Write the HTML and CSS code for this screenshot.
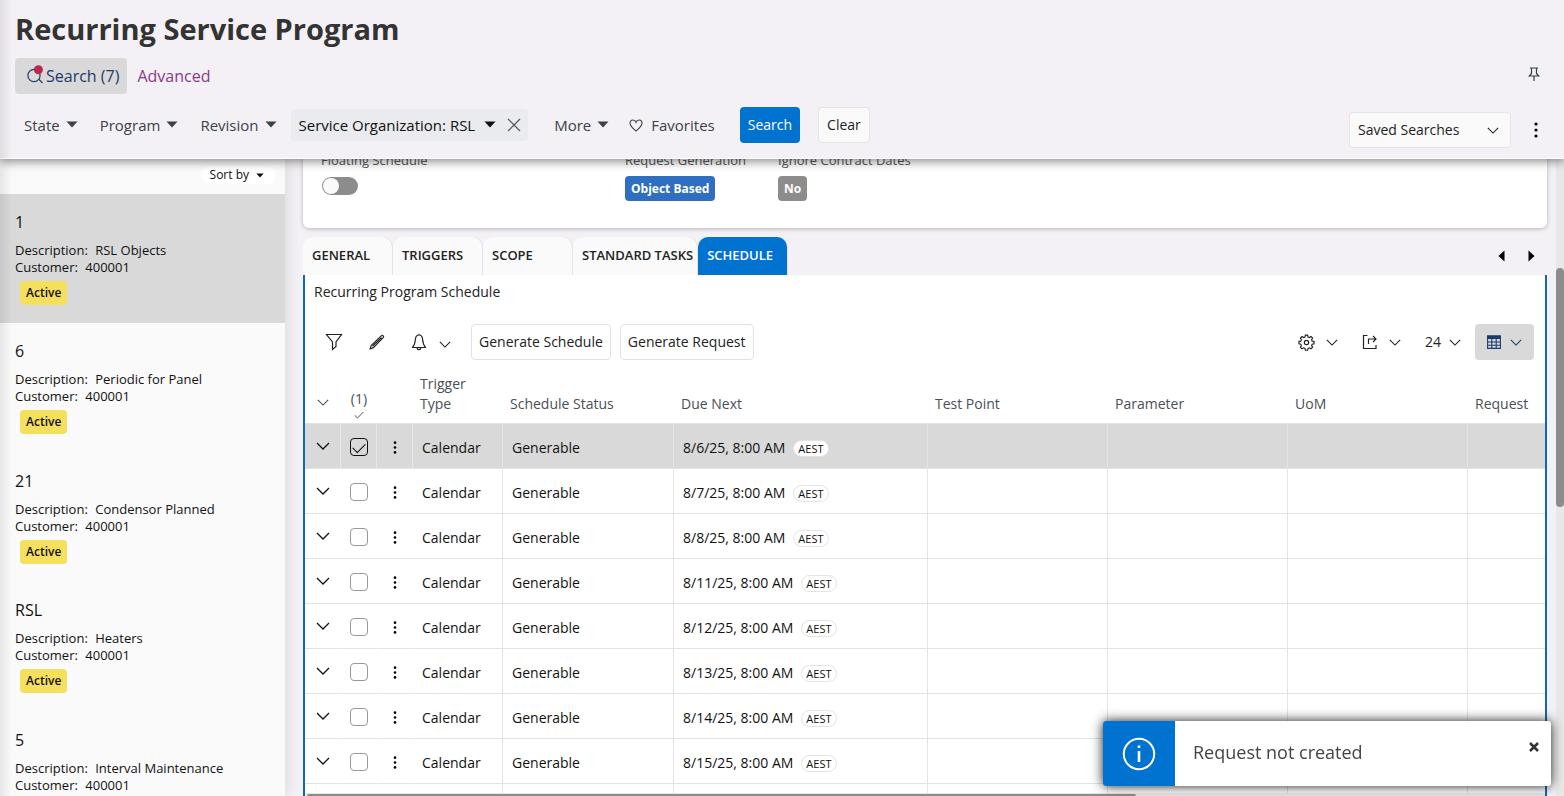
FILE: index.html
```html
<!DOCTYPE html>
<html lang="en">
<head>
    <meta charset="UTF-8">
    <meta name="viewport" content="width=device-width, initial-scale=1.0">
    <title>Recurring Service Program</title>
    <link rel="stylesheet" href="styles.css">
</head>
<body>
    <!-- icon sprite -->
    <svg class="sprite" aria-hidden="true">
        <symbol id="caret" viewBox="0 0 12 7"><path d="M0.5 0.5h11L6 6.5z" fill="currentColor"/></symbol>
        <symbol id="chevron" viewBox="0 0 14 8"><path d="M1 1l6 6 6-6" fill="none" stroke="currentColor" stroke-width="1.3"/></symbol>
        <symbol id="dots" viewBox="0 0 4 16"><circle cx="2" cy="2" r="1.6"/><circle cx="2" cy="8" r="1.6"/><circle cx="2" cy="14" r="1.6"/></symbol>
        <symbol id="cross" viewBox="0 0 14 14"><path d="M1 1l12 12M13 1L1 13" fill="none" stroke="currentColor" stroke-width="1.2"/></symbol>
    </svg>

    <header class="page-header">
        <h1>Recurring Service Program</h1>

        <div class="search-tabs">
            <button type="button" class="search-tab">
                <svg class="icon-search" viewBox="0 0 18 20">
                    <path d="M12.8 14.2l3.7 3.8" fill="none" stroke="#1d3a6b" stroke-width="1.2"/>
                    <circle cx="8" cy="10.5" r="6.1" fill="none" stroke="#1d3a6b" stroke-width="1.2"/>
                    <circle cx="12.4" cy="4.8" r="4.5" fill="#b8294f"/>
                </svg>
                Search (7)
            </button>
            <a href="#" class="advanced-link">Advanced</a>
            <button type="button" class="pin-btn" aria-label="Pin">
                <svg width="12" height="15" viewBox="0 0 12 15"><path d="M2 1h8M3.5 1v5.5L1.3 9h9.4L8.5 6.500V1M6 9v5" fill="none" stroke="currentColor" stroke-width="1.2"/></svg>
            </button>
        </div>

        <div class="filters">
            <button type="button" class="filter">State <svg class="caret"><use href="#caret"/></svg></button>
            <button type="button" class="filter">Program <svg class="caret"><use href="#caret"/></svg></button>
            <button type="button" class="filter">Revision <svg class="caret"><use href="#caret"/></svg></button>
            <div class="filter-chip">
                <button type="button" class="filter">Service Organization: RSL <svg class="caret"><use href="#caret"/></svg></button>
                <button type="button" class="chip-remove" aria-label="Remove"><svg width="14" height="14"><use href="#cross"/></svg></button>
            </div>
            <button type="button" class="filter filter-more">More <svg class="caret"><use href="#caret"/></svg></button>
            <button type="button" class="filter favorites">
                <svg width="14" height="13" viewBox="0 0 14 13"><path d="M7 12C4.500 9.800 1 7.300 1 4.200 1 2.200 2.300 1 3.900 1 5.300 1 6.500 1.900 7 3.200 7.500 1.900 8.700 1 10.100 1 11.700 1 13 2.200 13 4.200 13 7.300 9.500 9.800 7 12z" fill="none" stroke="currentColor" stroke-width="1.1"/></svg>
                Favorites
            </button>
            <button type="submit" class="btn btn-primary">Search</button>
            <button type="button" class="btn btn-clear">Clear</button>
            <div class="select-wrap saved-searches">
                <select aria-label="Saved Searches"><option>Saved Searches</option></select>
                <svg class="chevron"><use href="#chevron"/></svg>
            </div>
            <button type="button" class="menu-btn" aria-label="More options"><svg class="dots"><use href="#dots"/></svg></button>
        </div>
    </header>

    <div class="layout">
        <aside class="sidebar">
            <div class="sort-bar">
                <button type="button" class="sort-btn">Sort by <svg class="caret-small"><use href="#caret"/></svg></button>
            </div>
            <ul class="programs">
                <li class="program selected">
                    <h2>1</h2>
                    <p>Description: <span>RSL Objects</span></p>
                    <p>Customer: <span>400001</span></p>
                    <span class="status">Active</span>
                </li>
                <li class="program">
                    <h2>6</h2>
                    <p>Description: <span>Periodic for Panel</span></p>
                    <p>Customer: <span>400001</span></p>
                    <span class="status">Active</span>
                </li>
                <li class="program">
                    <h2>21</h2>
                    <p>Description: <span>Condensor Planned</span></p>
                    <p>Customer: <span>400001</span></p>
                    <span class="status">Active</span>
                </li>
                <li class="program">
                    <h2>RSL</h2>
                    <p>Description: <span>Heaters</span></p>
                    <p>Customer: <span>400001</span></p>
                    <span class="status">Active</span>
                </li>
                <li class="program">
                    <h2>5</h2>
                    <p>Description: <span>Interval Maintenance</span></p>
                    <p>Customer: <span>400001</span></p>
                </li>
            </ul>
        </aside>

        <main class="content">
            <section class="card">
                <div class="field field-wide">
                    <label for="floating">Floating Schedule</label>
                    <input type="checkbox" id="floating" class="toggle">
                </div>
                <div class="field">
                    <span class="field-label">Request Generation</span>
                    <span class="tag tag-blue">Object Based</span>
                </div>
                <div class="field">
                    <span class="field-label">Ignore Contract Dates</span>
                    <span class="tag tag-grey">No</span>
                </div>
            </section>

            <nav class="tabs">
                <button type="button" class="tab">GENERAL</button>
                <button type="button" class="tab">TRIGGERS</button>
                <button type="button" class="tab">SCOPE</button>
                <button type="button" class="tab">STANDARD TASKS</button>
                <button type="button" class="tab active">SCHEDULE</button>
                <div class="tab-arrows">
                    <button type="button" aria-label="Previous tab"><svg width="7" height="12" viewBox="0 0 7 12"><path d="M6.500 0.500v11L0.500 6z"/></svg></button>
                    <button type="button" aria-label="Next tab"><svg width="7" height="12" viewBox="0 0 7 12"><path d="M0.500 0.500v11L6.500 6z"/></svg></button>
                </div>
            </nav>

            <section class="panel">
                <h3>Recurring Program Schedule</h3>

                <div class="toolbar">
                    <button type="button" class="icon-btn" aria-label="Filter">
                        <svg width="18" height="18" viewBox="0 0 18 18"><path d="M1.500 1.500h15L11 9v4.500L7.500 16.500V9z" fill="none" stroke="currentColor" stroke-width="1.200"/></svg>
                    </button>
                    <button type="button" class="icon-btn" aria-label="Edit">
                        <svg width="18" height="18" viewBox="0 0 18 18"><path d="M2 16l1.300-3.600L13.300 2.900c1.300-1.200 3.100.5 1.900 1.800L5.500 14.600zM4.500 13.300l9-8.700" fill="none" stroke="currentColor" stroke-width="1.200" stroke-linejoin="round"/></svg>
                    </button>
                    <button type="button" class="icon-btn bell" aria-label="Notifications">
                        <svg width="16" height="18" viewBox="0 0 16 18"><path d="M1.500 14.500C3.800 12 4 10.500 4.400 6.500 4.600 3.500 6 2 8 2s3.400 1.500 3.600 4.500c.4 4 .6 5.500 2.900 8zM8 2V.7M6.200 14.700c0 2.600 3.600 2.600 3.600 0" fill="none" stroke="currentColor" stroke-width="1.200" stroke-linejoin="round"/></svg>
                        <svg class="chevron chevron-small"><use href="#chevron"/></svg>
                    </button>
                    <button type="button" class="btn btn-outline">Generate Schedule</button>
                    <button type="button" class="btn btn-outline">Generate Request</button>

                    <div class="view-tools">
                        <button type="button" class="tool" aria-label="Settings">
                            <svg width="17" height="17" viewBox="0 0 18 18"><circle cx="9" cy="9" r="2.300" fill="none" stroke="currentColor" stroke-width="1.200"/><path d="M7.800 1.200h2.400l.4 2 1.500.6 1.700-1.100 1.700 1.700-1.100 1.700.6 1.500 2 .4v2.400l-2 .4-.6 1.500 1.100 1.700-1.700 1.700-1.700-1.100-1.500.6-.4 2H7.800l-.4-2-1.500-.6-1.700 1.100-1.700-1.700 1.100-1.700-.6-1.500-2-.4V8l2-.4.600-1.500-1.100-1.700 1.700-1.700 1.700 1.100 1.500-.6z" fill="none" stroke="currentColor" stroke-width="1.200"/></svg>
                            <svg class="chevron chevron-small"><use href="#chevron"/></svg>
                        </button>
                        <button type="button" class="tool" aria-label="Export">
                            <svg width="16" height="16" viewBox="0 0 16 16"><path d="M5.500 1.500H1.500v13h12.500V11M6.500 10V5H14M11 2l3 3-3 3" fill="none" stroke="currentColor" stroke-width="1.200"/></svg>
                            <svg class="chevron chevron-small"><use href="#chevron"/></svg>
                        </button>
                        <div class="select-wrap page-size">
                            <select aria-label="Rows per page"><option>24</option></select>
                            <svg class="chevron chevron-small"><use href="#chevron"/></svg>
                        </div>
                        <button type="button" class="table-view" aria-label="Table view">
                            <svg width="14" height="14" viewBox="0 0 14 14"><path d="M.6 1h12.800v12.400H.6zM.6 7h12.800M.6 10.200h12.800M4.800 3v10.400M9.200 3v10.400" fill="none" stroke="currentColor" stroke-width="1.100"/><path d="M0 .5h14v3.500H0z" fill="currentColor"/></svg>
                            <svg class="chevron chevron-small"><use href="#chevron"/></svg>
                        </button>
                    </div>
                </div>

                <div class="table-wrap">
                    <table class="schedule">
                        <colgroup>
                            <col class="c-icon"><col class="c-icon"><col class="c-icon"><col class="c-trigger"><col class="c-status"><col class="c-due"><col class="c-wide"><col class="c-wide"><col class="c-wide"><col class="c-wide">
                        </colgroup>
                        <thead>
                            <tr>
                                <th class="cell-icon"><svg class="chevron chevron-small"><use href="#chevron"/></svg></th>
                                <th class="cell-count">(1)<svg width="10" height="8" viewBox="0 0 10 8"><path d="M.7 4.300L3.500 7 9.300 1" fill="none" stroke="currentColor"/></svg></th>
                                <th></th>
                                <th>Trigger Type</th>
                                <th>Schedule Status</th>
                                <th>Due Next</th>
                                <th>Test Point</th>
                                <th>Parameter</th>
                                <th>UoM</th>
                                <th>Request</th>
                            </tr>
                        </thead>
                        <tbody id="rows"></tbody>
                    </table>
                </div>
                <div class="h-scroll"><div class="h-thumb"></div></div>
            </section>
        </main>

        <div class="v-scroll"><div class="v-thumb"></div></div>
    </div>

    <div class="toast" role="status">
        <div class="toast-icon">
            <svg width="34" height="34" viewBox="0 0 34 34"><circle cx="17" cy="17" r="15.200" fill="none" stroke="#fff" stroke-width="2"/><path d="M17 14v11M17 8.500v2.500" stroke="#fff" stroke-width="2.600"/></svg>
        </div>
        <p>Request not created</p>
        <button type="button" class="toast-close" aria-label="Close"><svg width="10" height="10" viewBox="0 0 10 10"><path d="M1 1l8 8M9 1L1 9" stroke="currentColor" stroke-width="2.500"/></svg></button>
    </div>

    <script src="script.js"></script>
</body>
</html>
```
FILE: styles.css
```css
* {
    box-sizing: border-box;
}

body {
    margin: 0;
    height: 100vh;
    display: flex;
    flex-direction: column;
    overflow: hidden;
    background-color: #f3f1f5;
    font-family: "Open Sans", "Noto Sans", sans-serif;
    font-size: 14px;
    line-height: 20px;
    color: #111;
}

/* soft shade along the left edge of the window */
body::after {
    content: "";
    position: fixed;
    top: 0;
    bottom: 0;
    left: 0;
    width: 12px;
    background: linear-gradient(to right, rgba(0, 0, 0, 0.08), rgba(0, 0, 0, 0));
    pointer-events: none;
    z-index: 5;
}

h1, h2, h3, p, ul {
    margin: 0;
    padding: 0;
}

button, select {
    font: inherit;
    color: inherit;
    background: none;
    border: none;
    padding: 0;
    cursor: pointer;
}

.sprite {
    display: none;
}

.caret {
    width: 12px;
    height: 7px;
}

.caret-small {
    width: 8px;
    height: 5px;
}

.chevron {
    width: 14px;
    height: 8px;
}

.chevron-small {
    width: 12px;
    height: 7px;
}

.dots {
    width: 4px;
    height: 16px;
}

/* header */
.page-header {
    position: relative;
    z-index: 2;
    height: 159px;
    flex-shrink: 0;
    padding: 10px 16px 0 15px;
    background-color: #f3f1f5;
    border-bottom: 1px solid #fff;
    box-shadow: 0 2px 10px rgba(0, 0, 0, 0.5);
}

h1 {
    font-size: 29px;
    line-height: 38px;
    font-weight: 700;
    color: #333;
}

.search-tabs {
    display: flex;
    align-items: center;
    gap: 10px;
    margin-top: 10px;
    height: 36px;
    font-size: 16px;
}

.search-tab {
    display: flex;
    align-items: center;
    gap: 2px;
    height: 36px;
    padding: 0 8px 0 11px;
    border-radius: 4px;
    background-color: #d9d9d9;
    color: #1d3a6b;
}

.icon-search {
    width: 18px;
    height: 20px;
    margin-bottom: 2px;
}

.advanced-link {
    color: #873a8c;
    text-decoration: none;
}

.pin-btn {
    margin-left: auto;
    margin-right: 8px;
    color: #333f48;
}

.filters {
    display: flex;
    align-items: center;
    margin-top: 8px;
    padding-left: 9px;
    font-size: 15px;
    color: #3c4145;
}

.filter {
    display: flex;
    align-items: center;
    gap: 6px;
    margin-right: 22px;
    white-space: nowrap;
}

.filter .caret {
    margin-bottom: 2px;
}

.filter-chip {
    display: flex;
    align-items: center;
    height: 32px;
    margin-left: -8px;
    padding: 0 7px 0 8px;
    border-radius: 4px;
    background-color: #eaebee;
    color: #111;
}

.filter-chip .filter {
    gap: 9px;
    margin-right: 11px;
}

.chip-remove {
    display: flex;
    color: #555;
}

.filter-more {
    margin-left: 26px;
    margin-right: 20px;
}

.favorites {
    gap: 8px;
    margin-right: 25px;
}

.btn {
    height: 36px;
    padding: 0 8px;
    border-radius: 4px;
    font-size: 14px;
    white-space: nowrap;
}

.btn-primary {
    background-color: #0073d1;
    color: #fff;
    margin-right: 18px;
}

.btn-clear {
    background-color: #fafafa;
    border: 1px solid #e4e4e6;
    color: #222;
}

.select-wrap {
    position: relative;
    display: flex;
    align-items: center;
}

.select-wrap select {
    appearance: none;
    width: 100%;
    height: 100%;
    font-size: 14px;
}

.select-wrap .chevron {
    position: absolute;
    right: 11px;
    pointer-events: none;
}

.saved-searches {
    width: 162px;
    height: 36px;
    margin-left: auto;
    margin-top: 10px;
    border: 1px solid #e4e4e6;
    border-radius: 4px;
    background-color: #fafafa;
    color: #222;
}

.saved-searches select {
    padding-left: 8px;
}

.saved-searches .chevron {
    width: 12px;
    height: 7px;
}

.menu-btn {
    display: flex;
    margin: 10px 10px 0 23px;
}

/* body of the page */
.layout {
    flex: 1;
    min-height: 0;
    display: flex;
}

.sidebar {
    width: 285px;
    flex-shrink: 0;
    background-color: #fafafa;
    box-shadow: 4px 0 12px rgba(0, 0, 0, 0.08);
    overflow: hidden;
}

.sort-bar {
    display: flex;
    justify-content: flex-end;
    height: 35px;
    padding: 7px 9px 0 0;
}

.sort-btn {
    display: flex;
    align-items: center;
    gap: 7px;
    height: 18px;
    padding: 0 12px 0 9px;
    border-radius: 9px;
    background-color: #fff;
    font-size: 12px;
}

.programs {
    list-style: none;
}

.program {
    height: 129px;
    padding: 17px 15px 0;
    font-size: 13px;
    line-height: 17px;
}

.program:nth-child(even) {
    height: 130px;
}

.program.selected {
    background-color: #d9d9d9;
}

.program h2 {
    margin-bottom: 9px;
    font-size: 16px;
    line-height: 22px;
    font-weight: 400;
}

.program p span {
    margin-left: 4px;
}

.status {
    display: inline-block;
    margin: 5px 0 0 5px;
    padding: 0 6px;
    border-radius: 4px;
    background-color: #f4e05c;
    font-size: 12px;
    line-height: 24px;
    font-weight: 600;
}

.content {
    flex: 1;
    min-width: 0;
    display: flex;
    flex-direction: column;
    margin: 0 9px 0 18px;
}

/* partly scrolled under the header */
.card {
    display: flex;
    gap: 32px;
    flex-shrink: 0;
    height: 80px;
    margin-top: -11px;
    padding: 2px 18px;
    border-radius: 0 0 6px 6px;
    background-color: #fff;
    box-shadow: 0 1px 4px rgba(0, 0, 0, 0.25);
}

.field {
    display: flex;
    flex-direction: column;
    align-items: flex-start;
    gap: 6px;
    font-size: 13px;
    color: #555;
}

.field-wide {
    gap: 7px;
    width: 272px;
}

.toggle {
    appearance: none;
    width: 36px;
    height: 18px;
    margin: 0 0 0 1px;
    border-radius: 9px;
    background-color: #8c8c8c;
}

.toggle::before {
    content: "";
    display: block;
    width: 16px;
    height: 16px;
    margin: 1px;
    border-radius: 50%;
    background-color: #fafafa;
}

.tag {
    padding: 0 6px;
    border-radius: 4px;
    color: #fff;
    font-size: 12px;
    font-weight: 700;
    line-height: 25px;
}

.tag-blue {
    background-color: #2f6fc1;
}

.tag-grey {
    background-color: #8c8c8c;
}

.tabs {
    display: flex;
    gap: 1px;
    flex-shrink: 0;
    margin-top: 9px;
}

.tab {
    min-width: 89px;
    height: 38px;
    padding: 0 4px 2px 9px;
    border-radius: 10px 10px 0 0;
    background-color: #fafafa;
    box-shadow: 1px 0 0 #e3e2e5;
    font-size: 13px;
    font-weight: 600;
    text-align: left;
    white-space: nowrap;
    color: #222;
}

.tab.active {
    background-color: #0073d1;
    color: #fff;
}

.tab-arrows {
    display: flex;
    align-items: center;
    gap: 23px;
    margin-left: auto;
    margin-right: 12px;
}

.tab-arrows button {
    display: flex;
}

.panel {
    flex: 1;
    min-height: 0;
    display: flex;
    flex-direction: column;
    border: solid #0b6ab0;
    border-width: 0 2px;
    background-color: #fff;
}

h3 {
    padding: 7px 9px 0;
    font-size: 14px;
    line-height: 20px;
    font-weight: 500;
    color: #222;
}

.toolbar {
    display: flex;
    align-items: center;
    gap: 9px;
    height: 36px;
    flex-shrink: 0;
    margin: 22px 11px 10px 20px;
    color: #222;
}

.icon-btn {
    display: flex;
    align-items: center;
    margin-right: 16px;
}

.icon-btn.bell {
    gap: 12px;
    margin-right: 11px;
}

.bell .chevron {
    margin-top: 5px;
}

.btn-outline {
    padding: 0 7px;
    border: 1px solid #e2e2e2;
    background-color: #fff;
}

.view-tools {
    display: flex;
    align-items: center;
    gap: 24px;
    height: 36px;
    margin-left: auto;
}

.tool {
    display: flex;
    align-items: center;
    gap: 11px;
}

.page-size {
    width: 36px;
}

.page-size .chevron {
    right: 0;
}

.table-view {
    display: flex;
    align-items: center;
    gap: 9px;
    height: 36px;
    margin-left: -10px;
    padding: 0 12px;
    border-radius: 4px;
    background-color: #d9d9d9;
    color: #1d3a6b;
}

/* schedule table */
.table-wrap {
    flex: 1;
    min-height: 0;
    overflow: hidden;
}

.schedule {
    table-layout: fixed;
    width: 1343px;
    border-collapse: separate;
    border-spacing: 0;
}

.c-icon {
    width: 36px;
}

.c-trigger {
    width: 90px;
}

.c-status {
    width: 171px;
}

.c-due {
    width: 254px;
}

.c-wide {
    width: 180px;
}

.schedule th {
    height: 53px;
    padding: 0 20px 9px 7px;
    font-weight: 400;
    text-align: left;
    vertical-align: bottom;
    color: #4a4f57;
}

.schedule th.cell-icon {
    padding: 0 0 12px;
    text-align: center;
}

.schedule th.cell-count {
    padding: 0 0 4px;
    text-align: center;
}

.cell-count svg {
    display: block;
    margin: 2px auto 0;
}

.schedule td {
    height: 45px;
    padding: 4px 8px 0 9px;
    border-top: 1px solid #e3e3e3;
    border-right: 1px solid #e3e3e3;
    white-space: nowrap;
}

.schedule td.cell-icon {
    padding: 1px 0 0;
    border-right-color: transparent;
    text-align: center;
}

.schedule .selected td {
    background-color: #d9d9d9;
}

.schedule .selected td.cell-icon {
    border-right-color: #e8e8e8;
}

.row-btn {
    display: inline-flex;
    vertical-align: middle;
}

.expand {
    margin-bottom: 4px;
}

.row-btn .dots {
    height: 13px;
}

.row-check {
    appearance: none;
    display: block;
    width: 18px;
    height: 18px;
    margin: 1px auto 0;
    border: 1px solid #999;
    border-radius: 4px;
    background-color: #fff;
}

.row-check:checked {
    border-color: #111;
    background-color: transparent;
}

.row-check:checked::before {
    content: "";
    display: block;
    width: 11px;
    height: 6px;
    margin: 4px 0 0 2px;
    border: solid #111;
    border-width: 0 0 1px 1px;
    transform: rotate(-45deg);
}

.zone {
    display: inline-block;
    margin-left: 8px;
    padding: 0 4px;
    border: 1px solid #e3e3e3;
    border-radius: 9px;
    background-color: #fff;
    font-size: 11px;
    line-height: 15px;
}

.h-scroll {
    height: 3px;
    flex-shrink: 0;
    padding: 1px 0 0 2px;
    background-color: #e8e8e8;
}

.h-thumb {
    width: 67%;
    height: 2px;
    border-radius: 4px 4px 0 0;
    background-color: #8c8c8c;
}

.v-scroll {
    width: 8px;
    background-color: #e8e8e8;
    padding-top: 109px;
}

.v-thumb {
    height: 239px;
    border-radius: 4px;
    background-color: #8c8c8c;
}

/* notification */
.toast {
    position: fixed;
    right: 13px;
    bottom: 10px;
    z-index: 10;
    display: flex;
    width: 448px;
    height: 65px;
    border-radius: 3px;
    overflow: hidden;
    background-color: #fff;
    box-shadow: 0 0 12px rgba(0, 0, 0, 0.9);
}

.toast-icon {
    display: flex;
    align-items: center;
    justify-content: center;
    width: 72px;
    background-color: #0073d1;
}

.toast p {
    flex: 1;
    padding-left: 18px;
    font-size: 18px;
    line-height: 62px;
    color: #444;
}

.toast-close {
    align-self: flex-start;
    margin: 16px 12px 0 0;
    color: #333;
}
```
FILE: script.js
```javascript
const dueDates = ['8/6/25', '8/7/25', '8/8/25', '8/11/25', '8/12/25', '8/13/25', '8/14/25', '8/15/25'];

const rows = dueDates.map((date, index) => `
    <tr class="${index === 0 ? 'selected' : ''}">
        <td class="cell-icon"><button type="button" class="row-btn expand" aria-label="Expand row"><svg class="chevron"><use href="#chevron"/></svg></button></td>
        <td class="cell-icon"><input type="checkbox" class="row-check" aria-label="Select row" ${index === 0 ? 'checked' : ''}></td>
        <td class="cell-icon"><button type="button" class="row-btn" aria-label="Row menu"><svg class="dots"><use href="#dots"/></svg></button></td>
        <td>Calendar</td>
        <td>Generable</td>
        <td>${date}, 8:00 AM<span class="zone">AEST</span></td>
        <td></td>
        <td></td>
        <td></td>
        <td></td>
    </tr>
`);

// empty row that closes the list
rows.push('<tr>' + '<td class="cell-icon"></td>'.repeat(3) + '<td></td>'.repeat(7) + '</tr>');

document.getElementById('rows').innerHTML = rows.join('');
```
